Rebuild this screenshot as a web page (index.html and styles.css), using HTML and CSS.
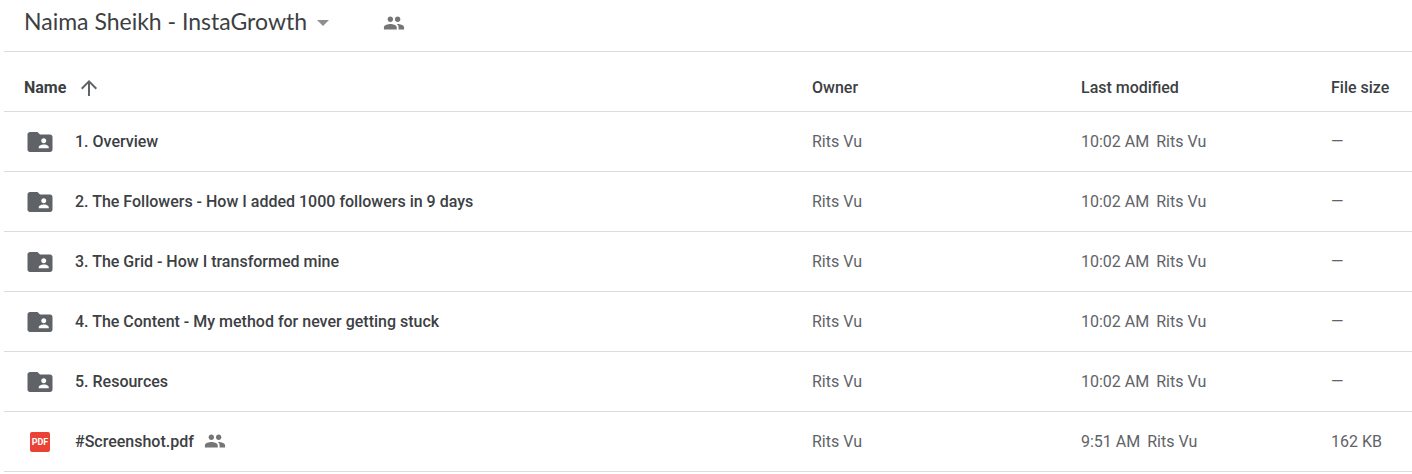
FILE: index.html
```html
<!DOCTYPE html>
<html lang="en">
<head>
    <meta charset="UTF-8">
    <meta name="viewport" content="width=device-width, initial-scale=1.0">
    <title>Naima Sheikh - InstaGrowth</title>
    <link rel="stylesheet" href="styles.css">
</head>
<body>
    <!-- Shared icon shapes -->
    <svg class="sprite" aria-hidden="true">
        <symbol id="people" viewBox="0 0 24 24">
            <path d="M16 11c1.66 0 2.99-1.34 2.99-3S17.66 5 16 5s-3 1.34-3 3 1.34 3 3 3zm-8 0c1.66 0 2.99-1.34 2.99-3S9.66 5 8 5 5 6.34 5 8s1.34 3 3 3zm0 2c-2.33 0-7 1.17-7 3.5V19h14v-2.5c0-2.33-4.67-3.5-7-3.5zm8 0c-.29 0-.62.02-.97.05 1.16.84 1.97 1.97 1.97 3.45V19h6v-2.5c0-2.33-4.67-3.5-7-3.5z"/>
        </symbol>
        <symbol id="folder" viewBox="0 0 24 24">
            <path d="M20 6h-8l-2-2H4c-1.1 0-2 .9-2 2v12c0 1.1.9 2 2 2h16c1.1 0 2-.9 2-2V8c0-1.1-.9-2-2-2zm-5 3c1.1 0 2 .9 2 2s-.9 2-2 2-2-.9-2-2 .9-2 2-2zm4 8h-8v-1c0-1.33 2.67-2 4-2s4 .67 4 2v1z"/>
        </symbol>
    </svg>

    <header class="toolbar">
        <h1><button class="title">Naima Sheikh - InstaGrowth <span class="caret"></span></button></h1>
        <button class="share" aria-label="Shared with others"><svg class="people-icon"><use href="#people"/></svg></button>
    </header>

    <table class="files">
        <thead>
            <tr>
                <th class="col-name">
                    <button class="sort">Name
                        <svg class="arrow-icon" viewBox="0 0 24 24"><path d="M4 12l1.4 1.4L11 7.8V20h2V7.8l5.6 5.6L20 12l-8-8-8 8z"/></svg>
                    </button>
                </th>
                <th class="col-owner">Owner</th>
                <th class="col-modified">Last modified</th>
                <th class="col-size">File size</th>
            </tr>
        </thead>
        <tbody>
            <tr>
                <td><a href="#" class="file"><svg class="file-icon"><use href="#folder"/></svg>1. Overview</a></td>
                <td>Rits Vu</td>
                <td>10:02 AM<span class="by">Rits Vu</span></td>
                <td>—</td>
            </tr>
            <tr>
                <td><a href="#" class="file"><svg class="file-icon"><use href="#folder"/></svg>2. The Followers - How I added 1000 followers in 9 days</a></td>
                <td>Rits Vu</td>
                <td>10:02 AM<span class="by">Rits Vu</span></td>
                <td>—</td>
            </tr>
            <tr>
                <td><a href="#" class="file"><svg class="file-icon"><use href="#folder"/></svg>3. The Grid - How I transformed mine</a></td>
                <td>Rits Vu</td>
                <td>10:02 AM<span class="by">Rits Vu</span></td>
                <td>—</td>
            </tr>
            <tr>
                <td><a href="#" class="file"><svg class="file-icon"><use href="#folder"/></svg>4. The Content - My method for never getting stuck</a></td>
                <td>Rits Vu</td>
                <td>10:02 AM<span class="by">Rits Vu</span></td>
                <td>—</td>
            </tr>
            <tr>
                <td><a href="#" class="file"><svg class="file-icon"><use href="#folder"/></svg>5. Resources</a></td>
                <td>Rits Vu</td>
                <td>10:02 AM<span class="by">Rits Vu</span></td>
                <td>—</td>
            </tr>
            <tr>
                <td>
                    <a href="#" class="file">
                        <svg class="file-icon" viewBox="0 0 30 30">
                            <rect class="pdf-box" x="5" y="5" width="20" height="20" rx="2"/>
                            <text class="pdf-text" x="15" y="18" text-anchor="middle">PDF</text>
                        </svg>
                        <span class="label">#Screenshot.pdf <svg class="people-icon"><use href="#people"/></svg></span>
                    </a>
                </td>
                <td>Rits Vu</td>
                <td>9:51 AM<span class="by">Rits Vu</span></td>
                <td>162 KB</td>
            </tr>
        </tbody>
    </table>
</body>
</html>
```
FILE: styles.css
```css
body {
    margin: 0 0 0 4px;
    font-family: Roboto, Arial, sans-serif;
    font-size: 16px;
    color: #3c4043;
    background-color: #fff;
}
button {
    padding: 0;
    border: none;
    background: none;
    color: inherit;
    font: inherit;
    cursor: pointer;
}
svg {
    display: block;
    flex: none;
}
.sprite {
    position: absolute;
    width: 0;
    height: 0;
}
.toolbar {
    display: flex;
    align-items: center;
    gap: 54px;
    height: 45px;
    padding: 0 20px 6px;
    border-bottom: 1px solid #dadce0;
}
h1 {
    margin: 0;
    padding-bottom: 4px;
    font-family: "Google Sans", Lato, sans-serif;
    font-size: 23px;
    font-weight: 400;
    line-height: 28px;
}
.title {
    display: flex;
    align-items: center;
    gap: 10px;
    white-space: nowrap;
}
.caret {
    margin-top: 4px;
    border: 6px solid transparent;
    border-top-color: #8f8f8f;
    border-bottom: none;
}
.people-icon {
    width: 22px;
    height: 22px;
    fill: #757575;
}
.files {
    width: 100%;
    table-layout: fixed;
    border-collapse: collapse;
}
th,
td {
    height: 59px;
    padding: 0;
    border-bottom: 1px solid #dadce0;
    text-align: left;
    white-space: nowrap;
}
th {
    padding-top: 12px;
    height: 47px;
    font-weight: 500;
}
td {
    color: #5f6368;
}
.col-owner {
    width: 269px;
}
.col-modified {
    width: 250px;
}
.col-size {
    width: 81px;
}
.sort {
    display: flex;
    align-items: center;
    gap: 11px;
    padding-left: 20px;
    font-weight: 700;
}
.arrow-icon {
    width: 24px;
    height: 24px;
    fill: #5f6368;
}
.file {
    display: flex;
    align-items: center;
    gap: 20px;
    padding-left: 21px;
    color: #3c4043;
    font-weight: 500;
    text-decoration: none;
}
.file-icon {
    width: 30px;
    height: 30px;
    fill: #5f6368;
}
.label {
    display: flex;
    gap: 10px;
    line-height: 24px;
}
.pdf-box {
    fill: #ea4335;
}
.pdf-text {
    fill: #fff;
    font-size: 9px;
    font-weight: 700;
}
.by {
    margin-left: 7px;
}
```
